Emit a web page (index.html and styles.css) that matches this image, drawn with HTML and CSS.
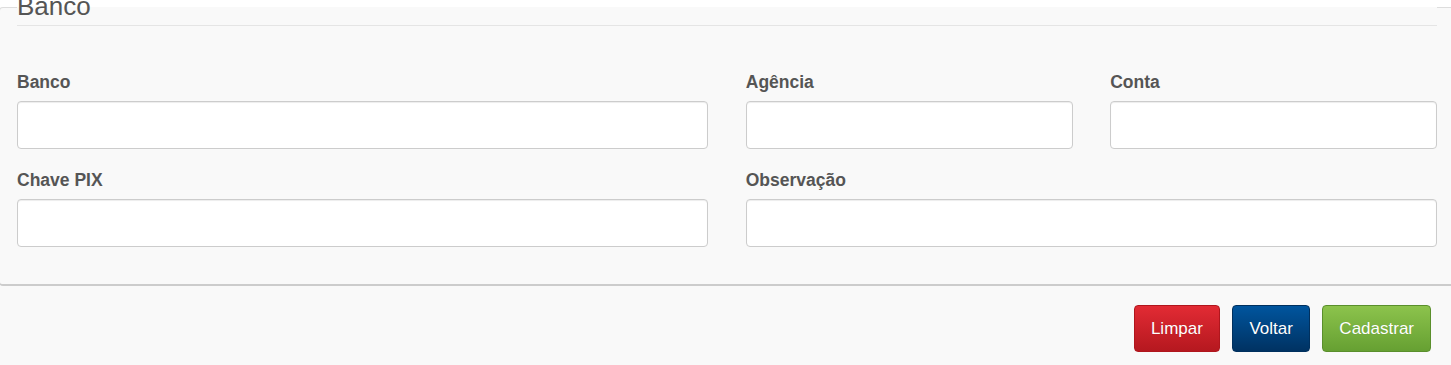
FILE: index.html
```html
<!DOCTYPE html>
<html lang="pt-BR">
<head>
<meta charset="utf-8">
<title>Banco</title>
<link rel="stylesheet" href="styles.css">
</head>
<body>
<form class="form">
  <fieldset class="panel">
    <legend class="panel-title">Banco</legend>
    <div class="grid">
      <div class="field span-2">
        <label class="label" for="banco">Banco</label>
        <input class="input" id="banco" type="text">
      </div>
      <div class="field">
        <label class="label" for="agencia">Agência</label>
        <input class="input" id="agencia" type="text">
      </div>
      <div class="field">
        <label class="label" for="conta">Conta</label>
        <input class="input" id="conta" type="text">
      </div>
      <div class="field span-2">
        <label class="label" for="pix">Chave PIX</label>
        <input class="input" id="pix" type="text">
      </div>
      <div class="field span-2">
        <label class="label" for="obs">Observação</label>
        <input class="input" id="obs" type="text">
      </div>
    </div>
  </fieldset>
  <div class="actions">
    <button type="reset" class="btn btn-red">Limpar</button>
    <button type="button" class="btn btn-blue">Voltar</button>
    <button type="submit" class="btn btn-green">Cadastrar</button>
  </div>
</form>
</body>
</html>
```
FILE: styles.css
```css
html, body {
  margin: 0;
  padding: 0;
  background: #ffffff;
  overflow: hidden;
}

body {
  font-family: "Liberation Sans", Arial, sans-serif;
  color: #555555;
}

.form {
  margin: 0;
}

.panel {
  margin: -11px -4px 0 -1px;
  padding: 0 17px 37px 17px;
  border: 1px solid #dddddd;
  border-bottom: 2px solid #cccccc;
  border-radius: 4px;
  background: #f9f9f9;
  min-width: 0;
}

.panel-title {
  width: 100%;
  box-sizing: border-box;
  padding: 2px 0 4px 0;
  margin: 0;
  font-size: 26px;
  line-height: 30px;
  font-weight: normal;
  color: #555555;
  border-bottom: 1px solid #e5e5e5;
}

.grid {
  display: grid;
  grid-template-columns: repeat(4, 1fr);
  column-gap: 37.5px;
  row-gap: 21px;
  padding-top: 46px;
}

.field {
  display: flex;
  flex-direction: column;
  min-width: 0;
}

.span-2 {
  grid-column: span 2;
}

.label {
  display: block;
  font-size: 17.5px;
  line-height: 20px;
  font-weight: bold;
  color: #555555;
  margin-bottom: 9px;
}

.input {
  display: block;
  box-sizing: border-box;
  width: 100%;
  height: 48px;
  margin: 0;
  padding: 6px 12px;
  border: 1px solid #cccccc;
  border-radius: 4px;
  background: #ffffff;
  box-shadow: inset 0 1px 1px rgba(0, 0, 0, 0.075);
  font-family: inherit;
  font-size: 16px;
}

.actions {
  display: flex;
  justify-content: flex-end;
  gap: 12.5px;
  padding: 19px 20px 0 0;
  height: 80px;
  box-sizing: border-box;
  background: #f9f9f9;
}

.btn {
  height: 47px;
  padding: 0 16px;
  border-radius: 4px;
  font-family: "Liberation Sans", Arial, sans-serif;
  font-size: 17px;
  color: #ffffff;
  cursor: pointer;
  text-shadow: 0 0 1px rgba(0, 0, 0, 0.15);
}

.btn-red {
  background: linear-gradient(to bottom, #e22b34, #b5181f);
  border: 1px solid #b0161d;
}

.btn-blue {
  background: linear-gradient(to bottom, #00559e, #003262);
  border: 1px solid #00305e;
}

.btn-green {
  background: linear-gradient(to bottom, #8cc34c, #66a032);
  border: 1px solid #5a8f2c;
}
```
